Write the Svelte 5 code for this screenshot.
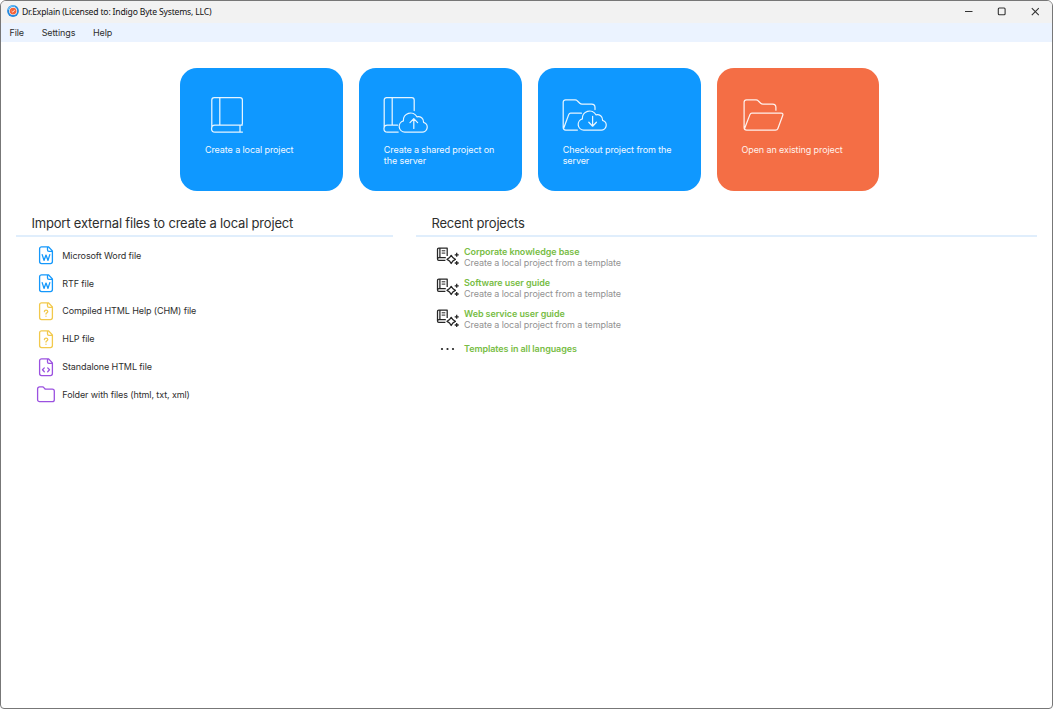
<script>
  const cards = [
    { icon: 'book', lines: ['Create a local project'] },
    { icon: 'bookCloud', lines: ['Create a shared project on', 'the server'] },
    { icon: 'folderCloud', lines: ['Checkout project from the', 'server'] },
    { icon: 'folder', lines: ['Open an existing project'], accent: true }
  ];
  const imports = [
    { kind: 'word', label: 'Microsoft Word file' },
    { kind: 'word', label: 'RTF file' },
    { kind: 'help', label: 'Compiled HTML Help (CHM) file' },
    { kind: 'help', label: 'HLP file' },
    { kind: 'code', label: 'Standalone HTML file' },
    { kind: 'folder', label: 'Folder with files (html, txt, xml)' }
  ];
  const recents = ['Corporate knowledge base', 'Software user guide', 'Web service user guide'];
</script>

<div class="window">
  <header class="titlebar">
    <svg class="logo" width="12" height="12" viewBox="0 0 12 12">
      <circle cx="6" cy="6" r="5.9" fill="#2288dd" />
      <path d="M1 5A5.2 5.2 0 0 1 8 1.2" stroke="#6cc4fb" stroke-width="1.2" fill="none" />
      <circle cx="6.1" cy="6.1" r="4" fill="#fff" />
      <circle cx="6.1" cy="6.1" r="3.4" fill="#f2633a" />
      <path d="M4.6 6l1.2 1.2 2-2.4" stroke="#ffd9cc" stroke-width="1" fill="none" />
    </svg>
    <span class="title">Dr.Explain (Licensed to: Indigo Byte Systems, LLC)</span>
    <svg class="controls" width="76" height="12" viewBox="0 0 76 12" fill="none" stroke="#333" stroke-width="1.1">
      <path d="M1 5.5h7.5" />
      <rect x="34.3" y="2" width="6.8" height="6.8" rx="1" />
      <path d="M67.8 2.1l7 7M74.8 2.1l-7 7" />
    </svg>
  </header>
  <nav><span>File</span><span>Settings</span><span>Help</span></nav>

  <main>
    <section class="cards">
      {#each cards as card}
        <button class:accent={card.accent}>
          <svg width="48" height="40" viewBox="0 0 48 40" fill="none" stroke="#fff" stroke-opacity=".9" stroke-width="1.25" stroke-linecap="round" stroke-linejoin="round">
            {#if card.icon === 'book'}
              <path d="M38.2 31.2H11a3.3 3.3 0 0 0 0 6.9h27.5M7.8 34V6a2.4 2.4 0 0 1 2.4-2.4h25.8a2.4 2.4 0 0 1 2.4 2.4v23.4q0 1.8-2.4 1.8M15.8 3.6v27.6M36 31.4v6.4" />
            {:else if card.icon === 'bookCloud'}
              <path d="M14.5 31.2H4.4a3.3 3.3 0 0 0 0 6.9h10.8M1.2 34V6a2.4 2.4 0 0 1 2.4-2.4h25.2a2.4 2.4 0 0 1 2.4 2.4v10.5M9.2 3.6v27.6" />
              <path d="M21.8 38.1a5.7 5.7 0 0 1-1.4-11.2A7.2 7.2 0 0 1 33.9 22.8A5.3 5.3 0 0 1 40.6 28.3A5 5 0 0 1 38.9 38.1Z" />
              <path d="M30.8 34.4V24.8M27 28.6L30.8 24.6l3.8 4" />
            {:else if card.icon === 'folderCloud'}
              <path d="M15.4 36.1H3.7A2.6 2.6 0 0 1 1.2 33.5V8.2A2.4 2.4 0 0 1 3.6 5.8h9.6q1.2 0 2 .9l2.6 2.6q.9.9 2.2.9h9.7a3.3 3.3 0 0 1 3.3 3.3v2M1.6 34.5L6.8 20.4q.5-1.2 1.8-1.2h10.8" />
              <path d="M21.8 36.1a5.7 5.7 0 0 1-1.4-11.2A7.2 7.2 0 0 1 33.9 20.8A5.3 5.3 0 0 1 40.6 26.3A5 5 0 0 1 38.9 36.1Z" />
              <path d="M30.6 22.3v9.7M26.8 28.2l3.8 4 3.8-4" />
            {:else}
              <path d="M34.9 16.2v-2.7a3.3 3.3 0 0 0-3.3-3.3H21.9q-1.3 0-2.2-.9l-2.6-2.6q-.8-.9-2-.9H5.5A2.4 2.4 0 0 0 3.1 8.2v25.3a2.6 2.6 0 0 0 2.6 2.6h28.8q1.8 0 2.4-1.6l4.8-13q.8-2.3-1.5-2.3H10.8q-1.3 0-1.8 1.2L3.5 34.7" />
            {/if}
          </svg>
          <span class="label">{#each card.lines as line}<span>{line}</span>{/each}</span>
        </button>
      {/each}
    </section>

    <div class="columns">
      <section class="imports">
        <h2>Import external files to create a local project</h2>
        <ul>
          {#each imports as item}
            <li>
              <svg class={item.kind} width="20" height="20" viewBox="0 0 20 20" fill="none" stroke="currentColor" stroke-width="1.3" stroke-linejoin="round" stroke-linecap="round">
                {#if item.kind === 'folder'}
                  <path d="M1.6 4.9a2 2 0 0 1 2-2h3q.8 0 1.3.7l.7.9q.5.6 1.3.6h6.4a2 2 0 0 1 2 2v8.6a2 2 0 0 1-2 2H3.6a2 2 0 0 1-2-2Z" />
                {:else}
                  <path d="M5.6 1.8h6.8l4 4.1v10.7a2 2 0 0 1-2 2H5.6a2 2 0 0 1-2-2v-12.8a2 2 0 0 1 2-2ZM11.5 2v3a1.4 1.4 0 0 0 1.4 1.4h3.2" />
                  {#if item.kind === 'word'}
                    <path d="M6.2 9.6l1.8 5.8L10 10.1l2 5.3 1.8-5.8" />
                  {:else if item.kind === 'help'}
                    <path d="M8.4 10.6q.1-1.4 1.7-1.4t1.7 1.4q0 .8-1 1.3-.8.4-.8 1.2M10 15.2v.1" />
                  {:else}
                    <path d="M8.3 10.9l-1.8 1.9 1.8 1.9M11.7 10.9l1.8 1.9-1.8 1.9" />
                  {/if}
                {/if}
              </svg>
              <span>{item.label}</span>
            </li>
          {/each}
        </ul>
      </section>

      <section class="recent">
        <h2>Recent projects</h2>
        <ul>
          {#each recents as name}
            <li>
              <svg width="24" height="20" viewBox="0 0 24 20" fill="none" stroke="#262626" stroke-width="1.25" stroke-linejoin="round">
                <path d="M9.4 14.3H2.8a1.4 1.4 0 0 1-1.3-1.4V3.4a1.3 1.3 0 0 1 1.3-1.3h8.4v8M3.9 2.1v9.4M9.8 11.6H2.9a1.3 1.3 0 0 0-1.3 1.3" />
                <path d="M5.7 4.8h3.6M5.7 7.1h3.6" stroke-width="1" />
                <path d="M15.2 9.3Q16.4 12 19.4 13.4Q16.4 14.8 15.2 17.5Q14 14.8 11 13.4Q14 12 15.2 9.3Z" />
                <path d="M20.7 6.8v4M18.7 8.8h4M20.7 15v4M18.7 17h4" stroke-width="1.3" />
              </svg>
              <div><strong>{name}</strong><span>Create a local project from a template</span></div>
            </li>
          {/each}
          <li class="more">
            <svg width="24" height="4" viewBox="0 0 24 4" fill="#222"><circle cx="6" cy="2" r="1.1" /><circle cx="11.5" cy="2" r="1.1" /><circle cx="17" cy="2" r="1.1" /></svg>
            <strong>Templates in all languages</strong>
          </li>
        </ul>
      </section>
    </div>
  </main>
</div>

<style>
  :global(body) { background: #fff; }
  .window {
    box-sizing: border-box;
    width: 1053px;
    height: 709px;
    border: 1px solid #777;
    border-radius: 6px 6px 4px 4px;
    overflow: hidden;
    background: #fff;
    color: #2e2e2e;
    font: 9px/11px Inter, sans-serif;
    letter-spacing: -0.1px;
    white-space: nowrap;
  }
  .titlebar {
    display: flex;
    align-items: center;
    height: 22px;
    padding: 0 12px 0 6px;
    background: #f2f2f2;
  }
  .logo { margin-bottom: 2px; }
  .title {
    margin-left: 3px;
    font: 8.6px/12px "Noto Sans", sans-serif;
    letter-spacing: -0.18px;
    color: #111;
  }
  nav {
    display: flex;
    gap: 17.6px;
    height: 19px;
    padding-left: 8.5px;
    line-height: 20px;
    background: #ebf3ff;
  }
  .controls { margin-left: auto; }
  .cards {
    display: flex;
    gap: 16px;
    padding: 26px 0 0 179px;
  }
  button {
    box-sizing: border-box;
    display: flex;
    flex-direction: column;
    width: 162.85px;
    height: 123px;
    padding: 26px 0 0 24px;
    border: 0;
    border-radius: 17px;
    background: #0f98ff;
    color: #f2f9ff;
    font: inherit;
    letter-spacing: inherit;
    text-align: left;
  }
  button.accent { background: #f46e45; color: #fff2ec; }
  button svg { display: block; }
  .label { display: flex; flex-direction: column; padding: 10px 0 0 1px; }
  .columns { display: flex; gap: 23px; padding: 22px 15px 0; }
  .imports { width: 377px; }
  .recent { flex: 1; }
  h2 {
    margin: 0;
    padding-left: 15.5px;
    height: 22px;
    border-bottom: 2px solid #e0eefc;
    font-size: 13px;
    font-weight: 400;
    letter-spacing: -0.19px;
    line-height: 20px;
  }
  ul { margin: 0; padding: 0; list-style: none; }
  .imports ul { padding: 4.3px 0 0 20px; }
  .imports li { display: flex; align-items: center; gap: 6.3px; height: 27.85px; }
  .word { color: #1598fb; }
  .help { color: #f2c94c; }
  .code, .folder { color: #9b51e0; }
  .recent ul { padding: 9px 0 0 20px; }
  .recent li { display: flex; align-items: flex-start; gap: 4px; height: 30.8px; }
  .recent li div { display: flex; flex-direction: column; }
  .recent li div span { color: #929292; letter-spacing: -0.08px; }
  strong { font-weight: 600; color: #78bd45; letter-spacing: -0.08px; }
  .recent li.more { align-items: center; height: 12px; padding-top: 4.5px; }
</style>
